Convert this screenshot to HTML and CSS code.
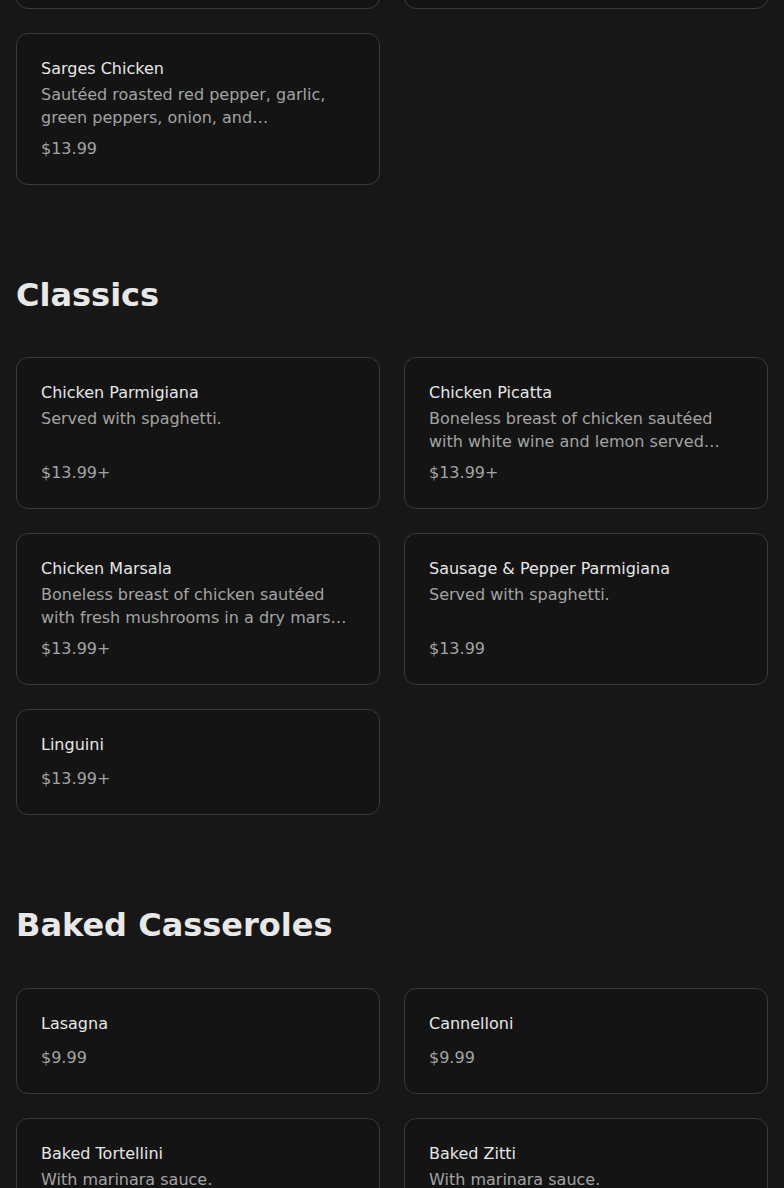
FILE: index.html
```html
<!DOCTYPE html>
<html lang="en">
<head>
<meta charset="utf-8">
<title>Menu</title>
<link rel="stylesheet" href="styles.css">
</head>
<body>
<main class="menu">
  <section class="section section--first">
    <div class="grid">
      <div class="card card--clipped"></div>
      <div class="card card--clipped"></div>
      <article class="card">
        <h3 class="card__title">Sarges Chicken</h3>
        <p class="card__desc">Sautéed roasted red pepper, garlic, green peppers, onion, and mushrooms, served over pasta.</p>
        <p class="card__price">$13.99</p>
      </article>
    </div>
  </section>

  <section class="section">
    <h2 class="section__title">Classics</h2>
    <div class="grid">
      <article class="card">
        <h3 class="card__title">Chicken Parmigiana</h3>
        <p class="card__desc">Served with spaghetti.</p>
        <p class="card__price">$13.99+</p>
      </article>
      <article class="card">
        <h3 class="card__title">Chicken Picatta</h3>
        <p class="card__desc">Boneless breast of chicken sautéed with white wine and lemon served over pasta.</p>
        <p class="card__price">$13.99+</p>
      </article>
      <article class="card">
        <h3 class="card__title">Chicken Marsala</h3>
        <p class="card__desc">Boneless breast of chicken sautéed with fresh mushrooms in a dry marsala wine sauce.</p>
        <p class="card__price">$13.99+</p>
      </article>
      <article class="card">
        <h3 class="card__title">Sausage &amp; Pepper Parmigiana</h3>
        <p class="card__desc">Served with spaghetti.</p>
        <p class="card__price">$13.99</p>
      </article>
      <article class="card">
        <h3 class="card__title">Linguini</h3>
        <p class="card__price">$13.99+</p>
      </article>
    </div>
  </section>

  <section class="section section--spaced">
    <h2 class="section__title">Baked Casseroles</h2>
    <div class="grid">
      <article class="card">
        <h3 class="card__title">Lasagna</h3>
        <p class="card__price">$9.99</p>
      </article>
      <article class="card">
        <h3 class="card__title">Cannelloni</h3>
        <p class="card__price">$9.99</p>
      </article>
      <article class="card">
        <h3 class="card__title">Baked Tortellini</h3>
        <p class="card__desc">With marinara sauce.</p>
        <p class="card__price">$9.99</p>
      </article>
      <article class="card">
        <h3 class="card__title">Baked Zitti</h3>
        <p class="card__desc">With marinara sauce.</p>
        <p class="card__price">$9.99</p>
      </article>
    </div>
  </section>
</main>
</body>
</html>
```

FILE: styles.css
```css
* { box-sizing: border-box; }

html, body {
  margin: 0;
  padding: 0;
  background: #171717;
}

body {
  font-family: "DejaVu Sans", "Liberation Sans", sans-serif;
  color: #e5e5e5;
  font-size: 16px;
  line-height: 1.5;
}

.menu {
  padding: 0 16px 40px;
}

.section {
  padding-top: 90px;
}

.section--first {
  padding-top: 0;
  margin-top: -143px;
}

.section--spaced .section__title {
  margin-bottom: 43px;
}

.section__title {
  margin: 0 0 42px;
  font-size: 32px;
  line-height: 40px;
  font-weight: 700;
  color: #e8e8e8;
}

.grid {
  display: grid;
  grid-template-columns: 1fr 1fr;
  gap: 24px;
  align-items: start;
}

.card {
  display: flex;
  flex-direction: column;
  background: #141414;
  border: 1px solid #3a3a3a;
  border-radius: 12px;
  padding: 24px;
}

.card--clipped {
  height: 152px;
}

.card__title {
  margin: 0;
  font-size: 16px;
  line-height: 22px;
  font-weight: 400;
  color: #e6e6e6;
}

.card__desc {
  margin: 4px 0 0;
  font-size: 16px;
  line-height: 22.5px;
  height: 45px;
  color: #a3a3a3;
  display: -webkit-box;
  -webkit-box-orient: vertical;
  -webkit-line-clamp: 2;
  overflow: hidden;
}

.card__price {
  margin: 9px 0 0;
  font-size: 16px;
  line-height: 22px;
  color: #a3a3a3;
}

.card__title + .card__price {
  margin-top: 12px;
}
```
